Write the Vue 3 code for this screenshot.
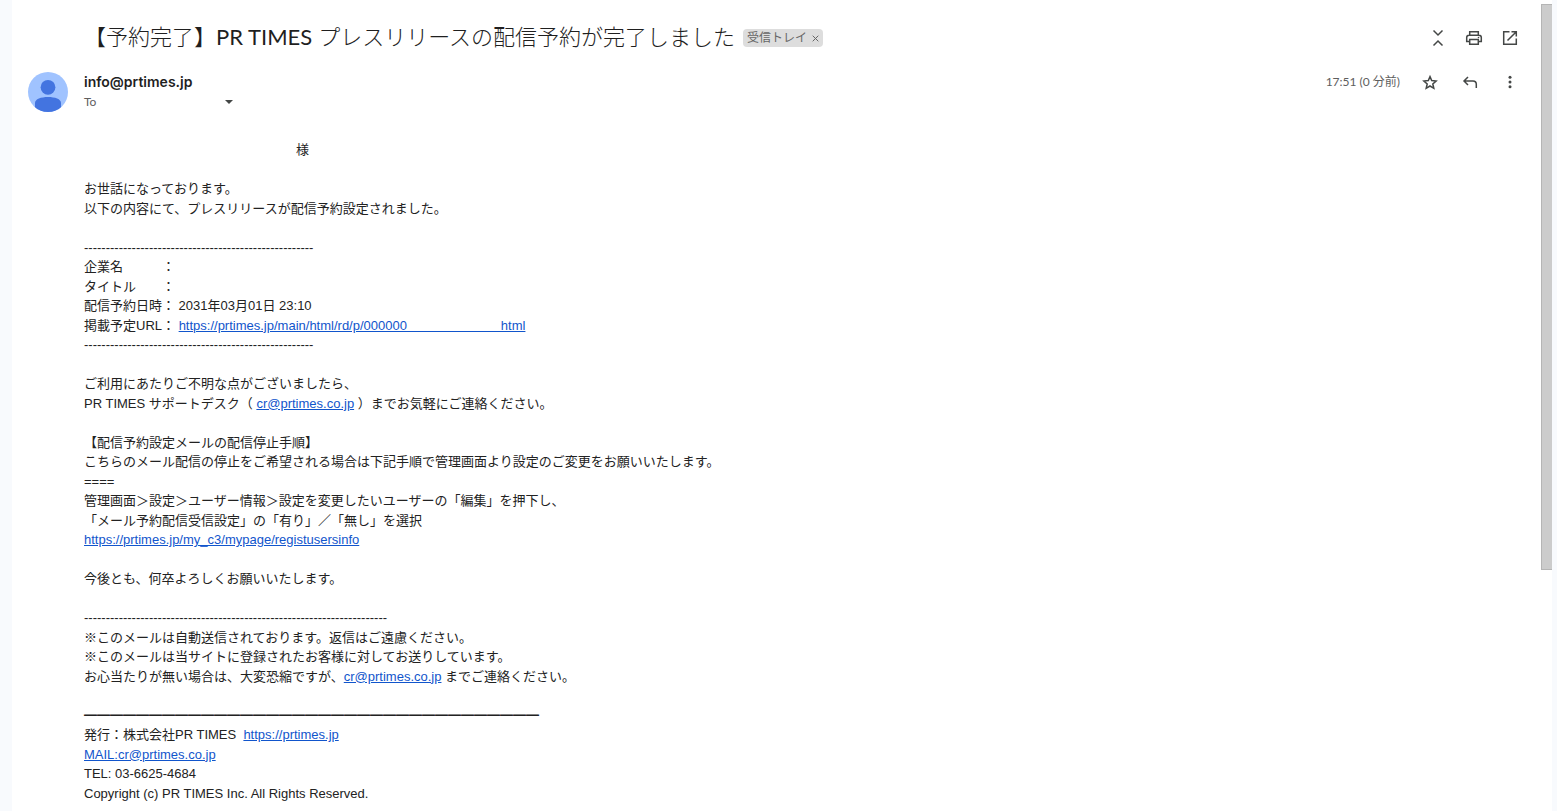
<script setup>
  import {ref} from "vue";

  const starred = ref(false);
  const showLabel = ref(true);

  const shortRule = "-".repeat(53);
  const longRule = "-".repeat(70);
  const heavyRule = "━".repeat(35);
  const urlGap = "\u00a0".repeat(26);
</script>

<template>
  <div class="page">
    <main>
      <header class="subject">
        <h1>【予約完了】<span>PR TIMES</span> プレスリリースの配信予約が完了しました</h1>
        <div v-if="showLabel" class="label">
          <span>受信トレイ</span>
          <button aria-label="ラベルを削除" @click="showLabel = false">
            <svg width="7" height="7" viewBox="0 0 7 7"><path d="M.7.7l5.6 5.6M6.3.7L.7 6.3" /></svg>
          </button>
        </div>
        <div class="tools">
          <button aria-label="すべて折りたたむ">
            <svg width="20" height="20" viewBox="0 0 20 20">
              <path class="line" d="M5.5 2.5L10 7l4.5-4.5M5.5 17.5L10 13l4.5 4.5" />
            </svg>
          </button>
          <button aria-label="すべて印刷">
            <svg width="20" height="20" viewBox="0 0 20 20">
              <path class="line" d="M5.7 7V3.7h8.6V7M5.7 13.5h-3v-4c0-1.4.9-2.300 2.300-2.300h10c1.400 0 2.300.9 2.300 2.300v4h-3M5.700 11.500h8.600v4.800H5.700z" />
              <circle cx="14.5" cy="9.5" r=".8" />
            </svg>
          </button>
          <button aria-label="新しいウィンドウで開く">
            <svg width="20" height="20" viewBox="0 0 20 20">
              <path class="line" d="M9.5 3.7H3.7v12.6h12.600v-5.800M11.500 3.700h4.800v4.800M16.300 3.700L7.500 12.500" />
            </svg>
          </button>
        </div>
      </header>

      <section class="sender">
        <svg class="avatar" width="40" height="40" viewBox="0 0 40 40">
          <clipPath id="face"><circle cx="20" cy="20" r="20" /></clipPath>
          <g clip-path="url(#face)">
            <rect width="40" height="40" fill="#a0c3ff" />
            <circle cx="20" cy="15.3" r="7.4" fill="#4374e0" />
            <path d="M7 40v-9c0-4 6-6 13-6s13 2 13 6v9z" fill="#4374e0" />
          </g>
        </svg>
        <div class="names">
          <h2>info@prtimes.jp</h2>
          <div class="to">
            <span>To</span>
            <button aria-label="詳細を表示">
              <svg width="8" height="4" viewBox="0 0 8 4"><path d="M0 0h8L4 4z" /></svg>
            </button>
          </div>
        </div>
        <time>17:51 (0 分前)</time>
        <div class="actions">
          <button aria-label="スター" :aria-pressed="starred" @click="starred = !starred">
            <svg width="20" height="20" viewBox="0 0 20 20">
              <path class="line" :class="{filled: starred}" d="M10 4.600l1.700 4 4.400.4-3.300 2.900 1 4.400-3.800-2.300-3.800 2.300 1-4.400L3.900 9l4.400-.4z" />
            </svg>
          </button>
          <button aria-label="返信">
            <svg width="20" height="20" viewBox="0 0 20 20">
              <path class="line" d="M8 5L4 9l4 4M4 9h9c2 0 3.300 1.300 3.300 3.300V16" />
            </svg>
          </button>
          <button aria-label="その他">
            <svg width="20" height="20" viewBox="0 0 20 20">
              <circle cx="10" cy="5.3" r="1.5" />
              <circle cx="10" cy="10" r="1.5" />
              <circle cx="10" cy="14.7" r="1.5" />
            </svg>
          </button>
        </div>
      </section>

      <article>
        <p class="recipient">様</p>
        <p>
          お世話になっております。<br>
          以下の内容にて、プレスリリースが配信予約設定されました。
        </p>
        <p>
          {{ shortRule }}<br>
          企業名　　　：<br>
          タイトル　　：<br>
          配信予約日時： 2031年03月01日 23:10<br>
          掲載予定URL： <a href="#">https://prtimes.jp/main/html/rd/p/000000{{ urlGap }}html</a><br>
          {{ shortRule }}
        </p>
        <p>
          ご利用にあたりご不明な点がございましたら、<br>
          PR TIMES サポートデスク（ <a href="mailto:cr@prtimes.co.jp">cr@prtimes.co.jp</a> ）までお気軽にご連絡ください。
        </p>
        <p>
          【配信予約設定メールの配信停止手順】<br>
          こちらのメール配信の停止をご希望される場合は下記手順で管理画面より設定のご変更をお願いいたします。<br>
          ====<br>
          管理画面＞設定＞ユーザー情報＞設定を変更したいユーザーの「編集」を押下し、<br>
          「メール予約配信受信設定」の「有り」／「無し」を選択<br>
          <a href="#">https://prtimes.jp/my_c3/mypage/registusersinfo</a>
        </p>
        <p>今後とも、何卒よろしくお願いいたします。</p>
        <p>
          {{ longRule }}<br>
          ※このメールは自動送信されております。返信はご遠慮ください。<br>
          ※このメールは当サイトに登録されたお客様に対してお送りしています。<br>
          お心当たりが無い場合は、大変恐縮ですが、<a href="mailto:cr@prtimes.co.jp">cr@prtimes.co.jp</a> までご連絡ください。
        </p>
        <p>
          <b>{{ heavyRule }}</b><br>
          発行：株式会社PR TIMES&nbsp; <a href="#">https://prtimes.jp</a><br>
          <a href="mailto:cr@prtimes.co.jp">MAIL:cr@prtimes.co.jp</a><br>
          TEL: 03-6625-4684<br>
          Copyright (c) PR TIMES Inc. All Rights Reserved.
        </p>
      </article>
    </main>
    <div class="scrollbar"></div>
  </div>
</template>

<style>
  body {
    margin: 0;
    background-color: #f8fafd;
  }
</style>

<style scoped>
  .page {
    display: flex;
    box-sizing: border-box;
    min-height: 100vh;
    margin: 0 5px 0 12px;
    background-color: white;
    color: #222;
    font-family: Lato, "Noto Sans CJK JP", sans-serif;
  }

  main {
    flex: 1;
    min-width: 0;
  }

  h1, h2, p {
    margin: 0;
  }

  button {
    display: flex;
    align-items: center;
    justify-content: center;
    padding: 0;
    border: none;
    background: none;
    color: #444746;
    cursor: pointer;
  }

  svg {
    display: block;
    fill: currentColor;
  }

  .line {
    fill: none;
    stroke: currentColor;
    stroke-width: 1.5;
  }

  .filled {
    fill: currentColor;
  }

  .subject {
    display: flex;
    align-items: center;
    padding: 20px 13px 0 72px;
  }

  h1 {
    padding-bottom: 2px;
    color: #1f1f1f;
    font-size: 22px;
    font-weight: 300;
    line-height: 34px;
  }

  h1 span {
    font-weight: 400;
  }

  .label {
    display: flex;
    align-items: center;
    gap: 5px;
    height: 18px;
    margin-left: 8px;
    padding: 0 4px;
    border-radius: 4px;
    background-color: #ddd;
    color: #666;
    font-size: 12px;
    line-height: 18px;
  }

  .label button {
    color: #666;
  }

  .label path {
    stroke: currentColor;
  }

  .tools {
    display: flex;
    margin-left: auto;
  }

  .tools button {
    width: 36px;
    height: 36px;
  }

  .sender {
    display: flex;
    align-items: flex-start;
    padding: 6px 11px 0 16px;
  }

  .avatar {
    margin-top: 10px;
  }

  .names {
    margin: 10px auto 0 16px;
  }

  h2 {
    color: #1f1f1f;
    font-family: Inter, sans-serif;
    font-size: 14px;
    font-weight: 600;
    line-height: 20px;
  }

  .to {
    display: flex;
    align-items: center;
    justify-content: space-between;
    width: 149px;
    color: #5e5e5e;
    font-size: 12px;
    line-height: 20px;
  }

  time {
    margin-right: 10px;
    color: #5e5e5e;
    font-size: 12px;
    line-height: 40px;
  }

  .actions {
    display: flex;
  }

  .actions button {
    width: 40px;
    height: 40px;
  }

  article {
    display: flex;
    flex-direction: column;
    gap: 1.5em;
    padding: 28px 16px 8px 72px;
    font-family: "Liberation Sans", "Noto Sans CJK JP", sans-serif;
    font-size: 13px;
    line-height: 1.5;
  }

  .recipient {
    padding-left: 212px;
  }

  a {
    color: #1155cc;
  }

  .scrollbar {
    box-sizing: border-box;
    width: 11px;
    height: 566px;
    margin-top: 4px;
    border: 1px solid #b5b5b5;
    border-right: none;
    background-color: #ccc;
  }
</style>
